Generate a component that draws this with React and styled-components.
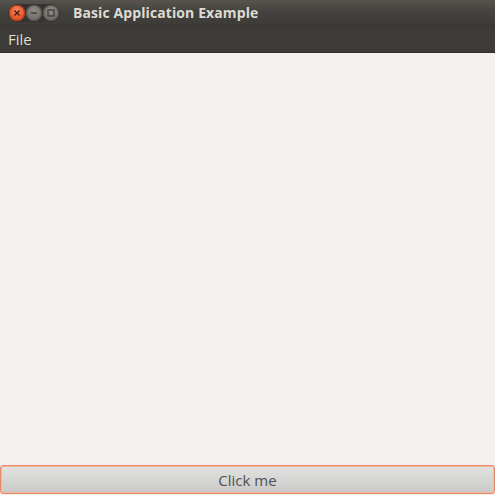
import React from "react";
import styled, { createGlobalStyle } from "styled-components";

const Global = createGlobalStyle`
  html, body { margin: 0; padding: 0; background: #f2f1f0; }
  body { font-family: "Open Sans", "DejaVu Sans", sans-serif; }
`;

const Window = styled.div`
  width: 495px;
  height: 495px;
  display: flex;
  flex-direction: column;
  background: #f2f1f0;
  overflow: hidden;
`;

const TitleBar = styled.div`
  height: 25px;
  display: flex;
  align-items: center;
  padding-left: 8px;
  background: linear-gradient(#57544f 0%, #45433f 45%, #3c3b37 100%);
  border-bottom: 1px solid #36352f;
`;

const Controls = styled.div`
  display: flex;
  gap: 1px;
  padding: 1px;
  border-radius: 10px;
  background: #34332f;
`;

const Ctrl = styled.div`
  width: 16px;
  height: 16px;
  border-radius: 50%;
  display: flex;
  align-items: center;
  justify-content: center;
  background: ${p => p.$close
    ? "radial-gradient(circle at 50% 35%, #f58a5f 0%, #e4552a 60%, #c4411b 100%)"
    : "radial-gradient(circle at 50% 35%, #8d8b85 0%, #75736d 60%, #5f5d58 100%)"};
  box-shadow: inset 0 0 0 1px ${p => (p.$close ? "#b3401c" : "#55534e")};
`;

const Title = styled.div`
  margin-left: 13px;
  color: #dfdbd2;
  font-family: "Open Sans", sans-serif;
  font-weight: 700;
  font-size: 14px;
  letter-spacing: 0.1px;
  line-height: 1;
`;

const MenuBar = styled.div`
  height: 26px;
  display: flex;
  align-items: center;
  background: #3c3b37;
  border-bottom: 1px solid #2f2e2b;
`;

const MenuItem = styled.div`
  padding: 0 8px;
  color: #dfdbd2;
  font-family: "Open Sans", sans-serif;
  font-size: 15px;
  line-height: 1;
`;

const Content = styled.div`
  flex: 1;
  background: #f2f1f0;
`;

const Button = styled.button`
  height: 29px;
  margin: 0 0 1px 0;
  width: 495px;
  border: 1px solid #ea8a62;
  border-radius: 3px;
  background: linear-gradient(#e2e2e1 0%, #d6d6d5 50%, #c9c9c8 100%);
  box-shadow: inset 0 0 0 1px #f0b79e;
  color: #505050;
  font-family: "Open Sans", sans-serif;
  font-size: 15px;
  padding: 0;
`;

export default function App() {
  return (
    <Window>
      <Global />
      <TitleBar>
        <Controls>
          <Ctrl $close>
            <svg width="8" height="8" viewBox="0 0 8 8">
              <path d="M1.5 1.5 L6.5 6.5 M6.5 1.5 L1.5 6.5" stroke="#4a1d0c" strokeWidth="1.4" />
            </svg>
          </Ctrl>
          <Ctrl>
            <svg width="8" height="8" viewBox="0 0 8 8">
              <path d="M1 4 H7" stroke="#3a3935" strokeWidth="1.4" />
            </svg>
          </Ctrl>
          <Ctrl>
            <svg width="8" height="8" viewBox="0 0 8 8">
              <rect x="1" y="1" width="6" height="6" fill="none" stroke="#3a3935" strokeWidth="1.2" />
            </svg>
          </Ctrl>
        </Controls>
        <Title>Basic Application Example</Title>
      </TitleBar>
      <MenuBar>
        <MenuItem>File</MenuItem>
      </MenuBar>
      <Content />
      <Button>Click me</Button>
    </Window>
  );
}
